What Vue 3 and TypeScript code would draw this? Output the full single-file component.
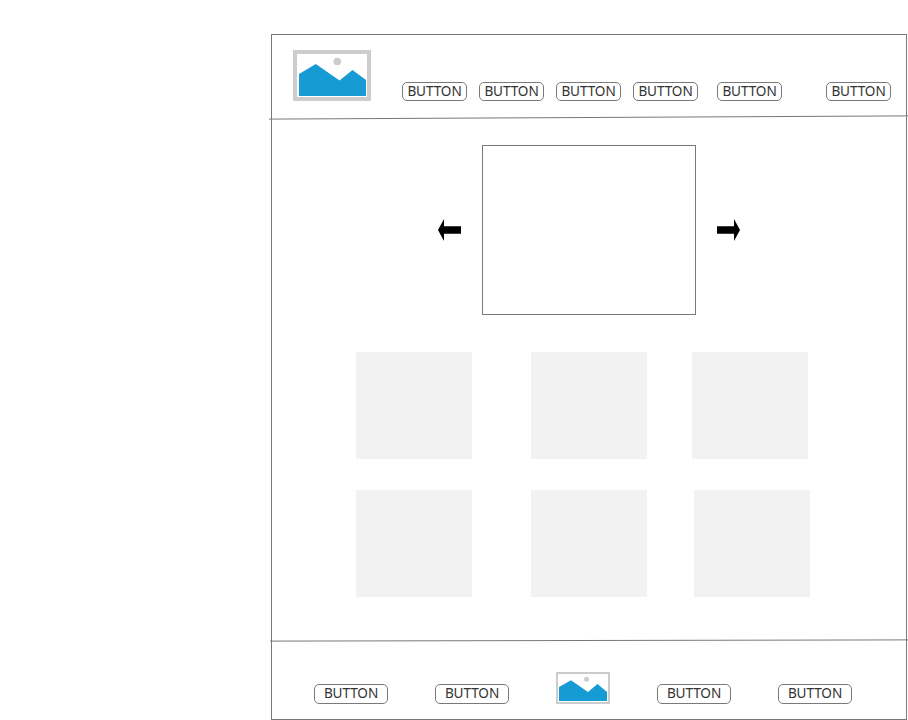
<script setup lang="ts">
const navItems: string[] = ['BUTTON', 'BUTTON', 'BUTTON', 'BUTTON']
const tileRows: number[][] = [[1, 2, 3], [4, 5, 6]]
</script>

<template>
  <div class="page">
    <div class="frame">
      <header class="header">
        <svg class="logo" width="78" height="51" viewBox="0 0 78 51">
          <rect x="2" y="2" width="74" height="47" fill="#fff" stroke="#ccc" stroke-width="4" />
          <path d="M6 24L22.8 14L46.5 30.5L59.5 20L73 30V46H6Z" fill="#169bd5" />
          <circle cx="44.3" cy="11.5" r="3.8" fill="#ccc" />
        </svg>
        <nav class="nav">
          <button v-for="(item, i) in navItems" :key="i" class="btn">{{ item }}</button>
        </nav>
        <button class="btn contact">BUTTON</button>
        <button class="btn account">BUTTON</button>
      </header>
      <svg class="rule" width="639" height="5" viewBox="0 0 639 5">
        <path d="M0 4.1L639 0.9" stroke="#797979" />
      </svg>

      <main class="main">
        <section class="carousel">
          <svg width="23" height="22" viewBox="0 0 23 22">
            <path d="M0 11L6 0V7.3H23V14.7H6V22Z" />
          </svg>
          <div class="slide"></div>
          <svg width="23" height="22" viewBox="0 0 23 22">
            <path d="M23 11L17 0V7.3H0V14.7H17V22Z" />
          </svg>
        </section>
        <section class="tiles">
          <div v-for="(row, r) in tileRows" :key="r" class="tile-row">
            <div v-for="tile in row" :key="tile" class="tile"></div>
          </div>
        </section>
      </main>

      <svg class="rule rule-bottom" width="638" height="3" viewBox="0 0 638 3">
        <path d="M0 2.1L638 0.9" stroke="#797979" />
      </svg>
      <footer class="footer">
        <button class="btn wide">BUTTON</button>
        <button class="btn wide">BUTTON</button>
        <svg class="mark" width="54" height="32" viewBox="0 0 54 32">
          <rect x="1" y="1" width="52" height="30" fill="#fff" stroke="#ccc" stroke-width="2" />
          <path d="M3 15L15 8.2L32 20L41.5 12L51 20V29H3Z" fill="#169bd5" />
          <circle cx="30.5" cy="7.2" r="2.5" fill="#ccc" />
        </svg>
        <button class="btn wide">BUTTON</button>
        <button class="btn wide">BUTTON</button>
      </footer>
    </div>
  </div>
</template>

<style>
body {
  margin: 0;
  background: #fff;
  overflow: hidden;
}
</style>

<style scoped>
.page {
  box-sizing: border-box;
  width: 908px;
  height: 720px;
  padding: 34px 1px 0 271px;
}
.frame {
  box-sizing: border-box;
  display: flex;
  flex-direction: column;
  width: 636px;
  height: 686px;
  border: 1px solid #797979;
}
svg {
  display: block;
  flex: none;
}
.header {
  box-sizing: border-box;
  display: flex;
  align-items: flex-end;
  height: 80px;
  padding: 0 15px 14px 21px;
}
.nav {
  display: flex;
  gap: 12px;
  margin-left: 31px;
}
.btn {
  box-sizing: border-box;
  flex: none;
  width: 65px;
  height: 19px;
  margin: 0;
  padding: 0 0 2px;
  border: 1px solid #797979;
  border-radius: 5px;
  background: #fff;
  color: #333;
  font-family: "Noto Sans", sans-serif;
  font-size: 13.6px;
  letter-spacing: -0.1px;
  line-height: 15px;
  text-align: center;
}
.contact {
  margin-left: 19px;
}
.account {
  margin-left: auto;
}
.rule {
  margin-left: -3px;
}
.rule-bottom {
  margin-left: -2px;
}
.main {
  height: 519px;
}
.carousel {
  display: flex;
  align-items: center;
  justify-content: center;
  gap: 21px;
  padding-top: 25px;
}
.slide {
  box-sizing: border-box;
  width: 214px;
  height: 170px;
  border: 1px solid #797979;
}
.tiles {
  display: flex;
  flex-direction: column;
  gap: 31px;
  padding: 37px 0 0 84px;
}
.tile-row {
  display: flex;
}
.tile {
  width: 116px;
  height: 107px;
  background: #f2f2f2;
}
.tile:nth-child(2) {
  margin-left: 59px;
}
.tile:nth-child(3) {
  margin-left: 45px;
}
.tile-row:last-child .tile:nth-child(3) {
  margin-left: 47px;
}
.footer {
  display: flex;
  align-items: flex-end;
  justify-content: space-between;
  height: 62px;
  padding: 0 54px 0 42px;
}
.wide {
  width: 74px;
  height: 20px;
  padding-bottom: 3px;
}
</style>
